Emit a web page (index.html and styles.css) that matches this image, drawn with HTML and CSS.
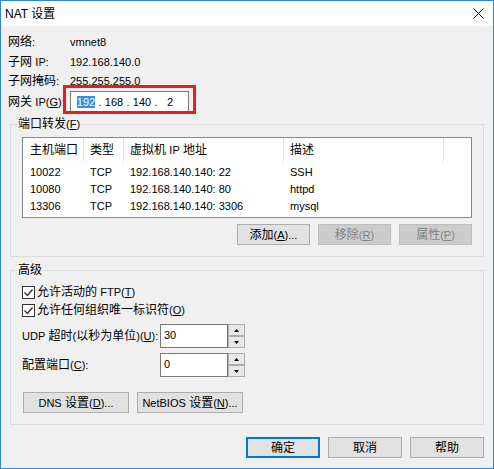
FILE: index.html
```html
<!DOCTYPE html>
<html lang="zh-CN">
<head>
<meta charset="utf-8">
<title>NAT 设置</title>
<link rel="stylesheet" href="styles.css">
</head>
<body>
<div class="window">
  <div class="titlebar">
    <span class="title">NAT 设置</span>
    <svg class="close" width="11" height="11" viewBox="0 0 11 11"><path d="M0.5 0.5 L10.5 10.5 M10.5 0.5 L0.5 10.5" stroke="#000" stroke-width="1" fill="none"/></svg>
  </div>
  <div class="content">
    <div class="info">
      <span>网络<span class="l">:</span></span><span class="l">vmnet8</span>
      <span>子网 <span class="l">IP:</span></span><span class="l">192.168.140.0</span>
      <span>子网掩码<span class="l">:</span></span><span class="l">255.255.255.0</span>
      <span>网关 <span class="l">IP(<u>G</u>):</span></span>
      <span class="ipwrap">
        <span class="ipbox l">
          <span class="oct"><span class="sel">192</span></span><span class="dot">.</span><span class="oct">168</span><span class="dot">.</span><span class="oct">140</span><span class="dot">.</span><span class="oct">2</span>
        </span>
        <span class="mark"></span>
      </span>
    </div>

    <fieldset class="group g1">
      <legend>端口转发<span class="l">(<u>F</u>)</span></legend>
      <div class="gbody">
        <div class="list">
          <div class="lrow head"><span><span>主机端口</span></span><span><span>类型</span></span><span><span>虚拟机 <span class="l">IP</span> 地址</span></span><span><span>描述</span></span><span class="blank"></span></div>
          <div class="lrow l"><span>10022</span><span>TCP</span><span>192.168.140.140: 22</span><span>SSH</span><span></span></div>
          <div class="lrow l"><span>10080</span><span>TCP</span><span>192.168.140.140: 80</span><span>httpd</span><span></span></div>
          <div class="lrow l"><span>13306</span><span>TCP</span><span>192.168.140.140: 3306</span><span>mysql</span><span></span></div>
        </div>
        <div class="btnrow">
          <button class="btn w73"><span>添加<span class="l">(<u>A</u>)...</span></span></button>
          <button class="btn w73 disabled"><span>移除<span class="l">(<u>R</u>)</span></span></button>
          <button class="btn w73 disabled"><span>属性<span class="l">(<u>P</u>)</span></span></button>
        </div>
      </div>
    </fieldset>

    <fieldset class="group g2">
      <legend>高级</legend>
      <div class="gbody">
        <label class="cb"><span class="box"><svg width="11" height="11" viewBox="0 0 11 11"><path d="M1.5 5.5 L4.5 8.5 L9.5 2.5" stroke="#333" stroke-width="1.4" fill="none"/></svg></span><span>允许活动的 <span class="l">FTP(<u>T</u>)</span></span></label>
        <label class="cb"><span class="box"><svg width="11" height="11" viewBox="0 0 11 11"><path d="M1.5 5.5 L4.5 8.5 L9.5 2.5" stroke="#333" stroke-width="1.4" fill="none"/></svg></span><span>允许任何组织唯一标识符<span class="l">(<u>O</u>)</span></span></label>
        <div class="spinrow">
          <span class="slbl"><span class="l">UDP</span> 超时<span class="l">(</span>以秒为单位<span class="l">)(<u>U</u>):</span></span>
          <span class="sinput l">30</span>
          <span class="sbtns">
            <span class="sb"><svg width="5" height="3" viewBox="0 0 5 3"><polygon points="0,3 2.5,0 5,3" fill="#000"/></svg></span>
            <span class="sb"><svg width="5" height="3" viewBox="0 0 5 3"><polygon points="0,0 5,0 2.5,3" fill="#000"/></svg></span>
          </span>
        </div>
        <div class="spinrow">
          <span class="slbl">配置端口<span class="l">(<u>C</u>):</span></span>
          <span class="sinput l">0</span>
          <span class="sbtns">
            <span class="sb"><svg width="5" height="3" viewBox="0 0 5 3"><polygon points="0,3 2.5,0 5,3" fill="#000"/></svg></span>
            <span class="sb"><svg width="5" height="3" viewBox="0 0 5 3"><polygon points="0,0 5,0 2.5,3" fill="#000"/></svg></span>
          </span>
        </div>
        <div class="dnsrow">
          <button class="btn w106"><span><span class="l">DNS</span> 设置<span class="l">(<u>D</u>)...</span></span></button>
          <button class="btn w106"><span><span class="l">NetBIOS</span> 设置<span class="l">(<u>N</u>)...</span></span></button>
        </div>
      </div>
    </fieldset>

    <div class="footer">
      <button class="btn w74 default"><span>确定</span></button>
      <button class="btn w74"><span>取消</span></button>
      <button class="btn w74"><span>帮助</span></button>
    </div>
  </div>
</div>
</body>
</html>
```

FILE: styles.css
```css
* { box-sizing: border-box; }
html, body { margin: 0; padding: 0; background: #fff; }
body { width: 494px; height: 469px; overflow: hidden; }

.window {
  width: 494px;
  height: 469px;
  border: 1px solid #2b87d8;
  display: flex;
  flex-direction: column;
  background: #f0f0f0;
  color: #000;
  font-family: "Liberation Sans", "Noto Sans CJK SC", sans-serif;
  font-size: 12px;
  line-height: 16px;
}

.l { font-size: 11px; }

.titlebar {
  height: 25px;
  flex: none;
  background: #fff;
  display: flex;
  align-items: center;
  justify-content: space-between;
  padding: 0 9px 0 4px;
}
.title { font-size: 12px; }
.close { display: block; }

.content {
  flex: 1;
  display: flex;
  flex-direction: column;
  padding: 6px 9px 0 7px;
}

.info {
  display: grid;
  grid-template-columns: 62px auto;
  grid-template-rows: 20px 19px 20px 21px;
  align-items: center;
  justify-items: start;
}

.ipwrap { position: relative; display: block; width: 119px; height: 21px; }
.ipbox {
  display: flex;
  align-items: center;
  width: 119px;
  height: 21px;
  background: #fff;
  border: 1px solid #7a7a7a;
  padding-left: 4px;
}
.oct { width: 22px; text-align: center; }
.dot { width: 6px; text-align: center; }
.sel { background: #3391e6; color: #fff; }
.mark {
  position: absolute;
  left: -7px;
  top: -6px;
  right: -7px;
  bottom: -2px;
  border: 3px solid #e3201e;
  pointer-events: none;
}

.group {
  margin: 0 0 0 2px;
  padding: 0;
  border: 1px solid #dcdcdc;
  min-width: 0;
}
.group legend {
  margin-left: 6px;
  padding: 0 1px;
  height: 16px;
  line-height: 16px;
}
.g1 { margin-top: 4px; }
.g2 { margin-top: 5px; }
.gbody { padding: 5px 11px 11px 11px; }

.list {
  height: 81px;
  border: 1px solid #828790;
  background: #fff;
}
.lrow {
  display: grid;
  grid-template-columns: 61px 40px 160px 160px 1fr;
  height: 17px;
  align-items: center;
}
.lrow > span { padding-left: 6px; white-space: nowrap; }
.lrow > span:first-child { padding-left: 7px; }
.lrow.head { height: 25px; align-items: stretch; }
.lrow.head > span {
  display: flex;
  align-items: center;
  padding-bottom: 1px;
  border-right: 1px solid #e5e5e5;
}
.lrow.head > span.blank { border-right: none; }

.btnrow {
  display: flex;
  justify-content: flex-end;
  gap: 8px;
  margin-top: 6px;
}

.btn {
  font: inherit;
  line-height: 16px;
  height: 21px;
  padding: 0;
  margin: 0;
  background: #e1e1e1;
  border: 1px solid #adadad;
  color: #000;
  display: flex;
  align-items: center;
  justify-content: center;
  white-space: nowrap;
}
.btn .l { font-size: 11px; }
.w73 { width: 73px; }
.w74 { width: 74px; }
.w106 { width: 106px; }
.btn.disabled { background: #cccccc; border-color: #bfbfbf; color: #838383; }
.btn.default { border: 2px solid #0078d7; }

.cb {
  display: flex;
  align-items: center;
  height: 18px;
}
.box {
  width: 13px;
  height: 13px;
  border: 1px solid #333;
  background: #fff;
  margin-right: 2px;
  display: flex;
  align-items: center;
  justify-content: center;
}
.box svg { display: block; }

.spinrow {
  display: flex;
  align-items: center;
  height: 24px;
  margin-top: 5px;
}
.slbl { width: 138px; white-space: nowrap; }
.sinput {
  width: 68px;
  height: 24px;
  background: #fff;
  border: 1px solid #7a7a7a;
  padding: 2px 0 0 3px;
  line-height: 16px;
}
.sbtns {
  width: 17px;
  height: 24px;
  display: flex;
  flex-direction: column;
}
.sb {
  height: 12px;
  background: #e8e8e8;
  border: 1px solid #acacac;
  display: flex;
  align-items: center;
  justify-content: center;
}
.sb svg { display: block; }

.dnsrow {
  display: flex;
  gap: 8px;
  margin: 15px 0 0 1px;
}

.footer {
  display: flex;
  justify-content: flex-end;
  gap: 8px;
  margin-top: 12px;
}
```
